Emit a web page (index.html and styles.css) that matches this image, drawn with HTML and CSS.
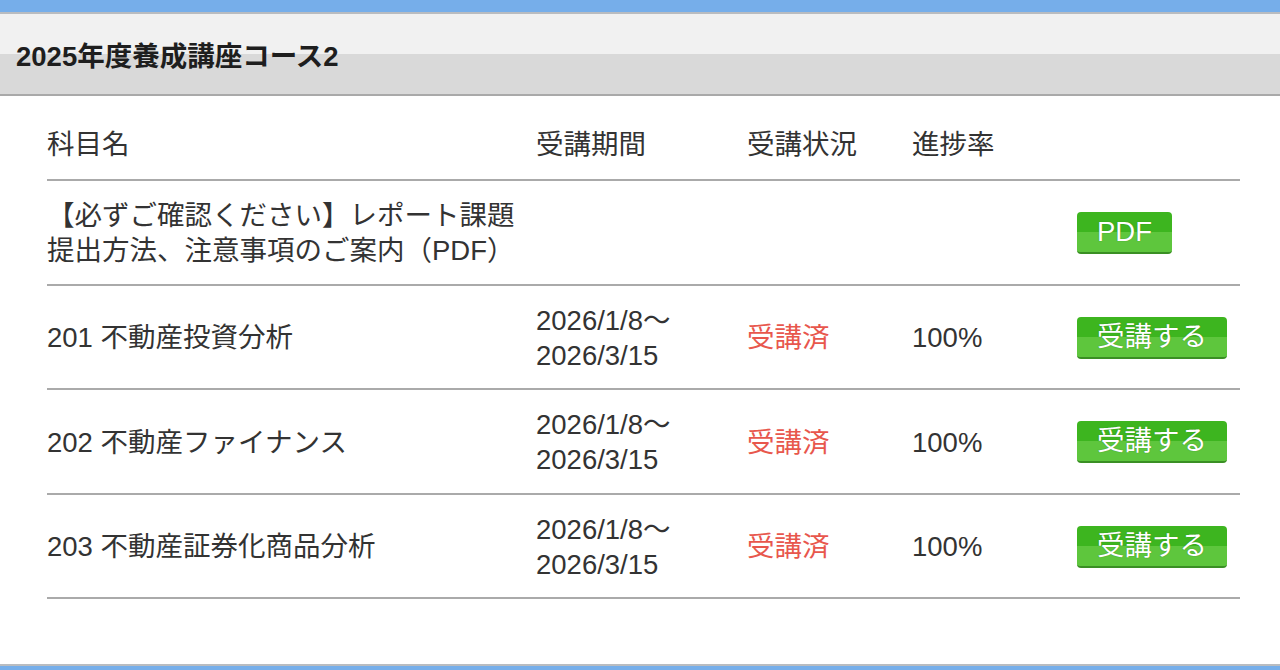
FILE: index.html
```html
<!DOCTYPE html>
<html lang="ja">
<head>
    <meta charset="UTF-8">
    <title>2025年度養成講座コース2</title>
    <link rel="stylesheet" href="styles.css">
</head>
<body>
    <div class="topbar"></div>
    <div class="panel">
        <div class="panel-head">
            <h2>2025年度養成講座コース2</h2>
        </div>
        <div class="panel-body">
            <table class="course-table">
                <thead>
                    <tr>
                        <th class="col-name">科目名</th>
                        <th class="col-period">受講期間</th>
                        <th class="col-status">受講状況</th>
                        <th class="col-rate">進捗率</th>
                        <th class="col-btn"></th>
                    </tr>
                </thead>
                <tbody>
                    <tr>
                        <td>【必ずご確認ください】レポート課題<br>提出方法、注意事項のご案内（PDF）</td>
                        <td></td>
                        <td></td>
                        <td></td>
                        <td><a class="btn" href="#">PDF</a></td>
                    </tr>
                    <tr>
                        <td>201 不動産投資分析</td>
                        <td>2026/1/8～<br>2026/3/15</td>
                        <td class="done">受講済</td>
                        <td>100%</td>
                        <td><a class="btn" href="#">受講する</a></td>
                    </tr>
                    <tr>
                        <td>202 不動産ファイナンス</td>
                        <td>2026/1/8～<br>2026/3/15</td>
                        <td class="done">受講済</td>
                        <td>100%</td>
                        <td><a class="btn" href="#">受講する</a></td>
                    </tr>
                    <tr>
                        <td>203 不動産証券化商品分析</td>
                        <td>2026/1/8～<br>2026/3/15</td>
                        <td class="done">受講済</td>
                        <td>100%</td>
                        <td><a class="btn" href="#">受講する</a></td>
                    </tr>
                </tbody>
            </table>
        </div>
    </div>
    <div class="next-panel"></div>
</body>
</html>
```

FILE: styles.css
```css
body {
    margin: 0;
    font-family: 'Liberation Sans', 'Noto Sans CJK JP', sans-serif;
    color: #333;
    background: #fff;
    overflow: hidden;
}
.topbar {
    height: 12px;
    background: #76aeea;
    border-bottom: 2px solid #b9bcc0;
}
.panel-head {
    height: 80px;
    background: linear-gradient(to bottom, #f1f1f1 0, #f1f1f1 50%, #d9d9d9 50%, #d9d9d9 100%);
    border-bottom: 2px solid #a9a9a9;
    display: flex;
    align-items: center;
}
.panel-head h2 {
    margin: 0 0 0 16px;
    font-size: 27.5px;
    font-weight: bold;
    color: #1e1e1e;
}
.panel-body {
    padding: 14px 40px 65px 47px;
}
.course-table {
    width: 100%;
    border-collapse: collapse;
    font-size: 27.5px;
    line-height: 35px;
}
.course-table th {
    font-weight: normal;
    text-align: left;
    padding: 17px 0 17px 0;
    border-bottom: 2px solid #aaa;
}
.course-table td {
    padding: 17px 0 15.5px 0;
    border-bottom: 2px solid #aaa;
    vertical-align: middle;
}
.col-name { width: 489px; }
.col-period { width: 211px; }
.col-status { width: 165px; }
.col-rate { width: 165px; }
.done {
    color: #e8574d;
}
.btn {
    display: inline-block;
    height: 40px;
    line-height: 40px;
    padding: 0 20px;
    border-radius: 4px;
    background: linear-gradient(to bottom, #3db51f 0, #3db51f 50%, #5ec63d 50%, #5ec63d 100%);
    border-bottom: 2px solid #3a8f24;
    color: #fff;
    font-size: 27.5px;
    text-decoration: none;
    text-shadow: 0 0 1px #2c7a17;
}
.next-panel {
    border-top: 2px solid #b9bcc0;
    height: 20px;
    background: #76aeea;
}
```
